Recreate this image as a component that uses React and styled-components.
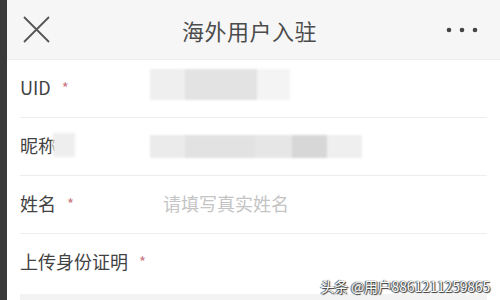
import styled, { createGlobalStyle } from 'styled-components'

const GlobalStyle = createGlobalStyle`
  html, body {
    margin: 0;
    padding: 0;
    background: #ffffff;
  }
  body {
    font-family: 'Noto Sans CJK SC', 'Liberation Sans', sans-serif;
  }
`

const Frame = styled.div`
  position: relative;
  width: 500px;
  height: 300px;
  overflow: hidden;
  border-left: 7px solid #3a3a3a;
  box-sizing: border-box;
  background: #fff;
`

const Header = styled.div`
  display: grid;
  grid-template-columns: 60px 1fr 60px;
  align-items: center;
  height: 60px;
  background: #f6f6f6;
  border-bottom: 1px solid #ececec;
  box-sizing: border-box;
`

const Title = styled.div`
  text-align: center;
  font-size: 22px;
  color: #4c4c4c;
  letter-spacing: 0.5px;
  padding-right: 8px;
`

const IconSlot = styled.div`
  display: flex;
  align-items: center;
  justify-content: ${(p) => p.$align};
  padding: ${(p) => p.$pad};
`

const Form = styled.div`
  display: flex;
  flex-direction: column;
  padding: 0 13px 0 13px;
`

const Row = styled.div`
  display: flex;
  align-items: center;
  height: 57px;
  border-bottom: ${(p) => (p.$last ? 'none' : '1px solid #ededed')};
`

const Label = styled.div`
  display: flex;
  align-items: center;
  width: ${(p) => (p.$wide ? 'auto' : '130px')};
  font-size: 18px;
  color: #424242;
  margin-top: -3px;
`

const Star = styled.span`
  margin-left: 11px;
  font-size: 15px;
  color: #c97a84;
`

const Placeholder = styled.div`
  font-size: 18px;
  color: #c4c4c4;
  margin-left: 13px;
  margin-top: -3px;
`

const Blur = styled.div`
  display: flex;
  height: ${(p) => p.$h}px;
  margin-left: ${(p) => p.$ml}px;
  margin-top: ${(p) => p.$mt}px;
  filter: blur(1px);
`

const Patch = styled.div`
  height: 100%;
  background: ${(p) => p.$c};
`

const SmallBlur = styled.div`
  width: 22px;
  height: 24px;
  margin-left: -3px;
  background: #eeeeee;
  filter: blur(1.5px);
`

const UploadBox = styled.div`
  height: 20px;
  margin-top: 3px;
  background: #f3f3f3;
`

const Watermark = styled.div`
  position: absolute;
  right: 10px;
  bottom: 4px;
  font-size: 14px;
  color: #ffffff;
  text-shadow: 0 0 1px #222, 1px 1px 1px #333, -1px 0 1px #555;
  letter-spacing: -0.2px;
`

const uidPatches = [
  { w: 35, c: '#efefef' },
  { w: 72, c: '#e3e3e3' },
  { w: 33, c: '#f4f4f4' },
]

const nickPatches = [
  { w: 35, c: '#ebebeb' },
  { w: 70, c: '#e2e2e2' },
  { w: 37, c: '#e6e6e6' },
  { w: 35, c: '#d7d7d7' },
  { w: 35, c: '#efefef' },
]

function Patches({ items, h, ml, mt = 0 }) {
  return (
    <Blur $h={h} $ml={ml} $mt={mt}>
      {items.map((p, i) => (
        <Patch key={i} $c={p.c} style={{ width: p.w }} />
      ))}
    </Blur>
  )
}

export default function App() {
  return (
    <>
      <GlobalStyle />
      <Frame>
        <Header>
          <IconSlot $align="flex-start" $pad="0 0 0 16px">
            <svg width="27" height="27" viewBox="0 0 27 27">
              <path d="M1 1L26 26M26 1L1 26" stroke="#555" strokeWidth="1.8" fill="none" />
            </svg>
          </IconSlot>
          <Title>海外用户入驻</Title>
          <IconSlot $align="flex-end" $pad="0 22px 0 0">
            <svg width="32" height="6" viewBox="0 0 32 6">
              <circle cx="3" cy="3" r="2.3" fill="#444" />
              <circle cx="16" cy="3" r="2.3" fill="#444" />
              <circle cx="29" cy="3" r="2.3" fill="#444" />
            </svg>
          </IconSlot>
        </Header>
        <Form>
          <Row>
            <Label>
              UID<Star>*</Star>
            </Label>
            <Patches items={uidPatches} h={31} ml={0} mt={-8} />
          </Row>
          <Row>
            <Label>
              昵称
              <SmallBlur />
            </Label>
            <Patches items={nickPatches} h={23} ml={0} />
          </Row>
          <Row>
            <Label>
              姓名<Star>*</Star>
            </Label>
            <Placeholder>请填写真实姓名</Placeholder>
          </Row>
          <Row $last>
            <Label $wide>
              上传身份证明<Star>*</Star>
            </Label>
          </Row>
          <UploadBox />
        </Form>
        <Watermark>头条 @用户8861211259865</Watermark>
      </Frame>
    </>
  )
}
